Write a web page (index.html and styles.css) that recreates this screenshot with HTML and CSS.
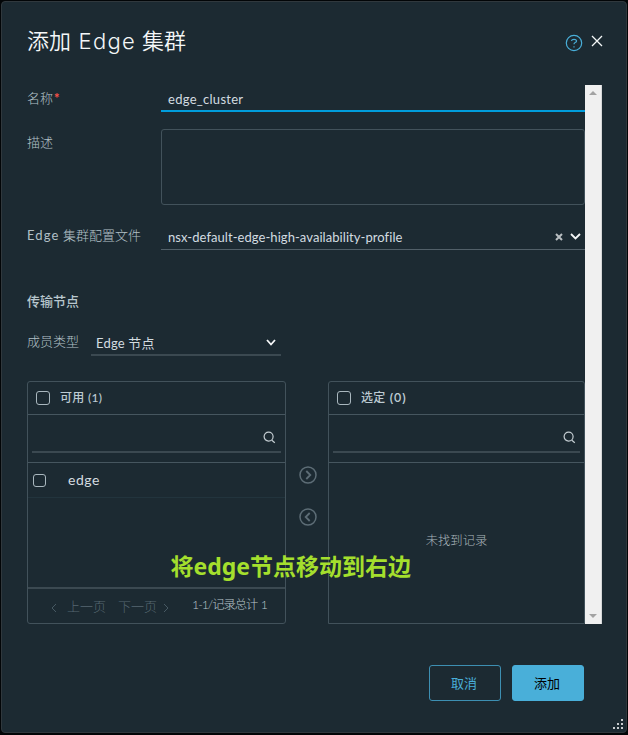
FILE: index.html
```html
<!DOCTYPE html>
<html lang="zh-CN">
<head>
<meta charset="utf-8">
<title>添加 Edge 集群</title>
<link rel="stylesheet" href="styles.css">
</head>
<body>
<div class="modal">
  <header class="header">
    <h1 class="title">添加 <span class="title-latin">Edge</span> 集群</h1>
    <svg class="help" width="18" height="18" viewBox="0 0 18 18"><circle cx="9" cy="9" r="7.7"/><path d="M6.4 6.8Q6.8 5.4 9 5.4T11.6 6.8Q11.6 8 10.2 8.5Q9 9 9 10.2M9 12.2v1.2"/></svg>
    <svg class="close" width="12" height="12" viewBox="0 0 12 12"><path d="M1 1l10 10M11 1L1 11"/></svg>
  </header>
  <div class="body">
    <main class="content">
      <div class="row name-row"><label class="label">名称<b class="required">*</b></label><div class="input focused"><span class="t-name">edge_cluster</span></div></div>
      <div class="row desc-row"><label class="label">描述</label><div class="textarea"></div></div>
      <div class="row profile-row"><label class="label"><span class="t-edge">Edge</span> 集群配置文件</label>
        <div class="input combo"><span class="t-profile">nsx-default-edge-high-availability-profile</span>
          <svg class="clear" width="8" height="8" viewBox="0 0 8 8"><path d="M1 1l6 6M7 1L1 7"/></svg>
          <svg class="chevron" width="11" height="7" viewBox="0 0 11 7"><path d="M1 1l4.5 4.5L10 1"/></svg>
        </div></div>
      <h2 class="section">传输节点</h2>
      <div class="type-row"><label class="label type-label">成员类型</label><div class="select"><span class="t-type">Edge 节点</span><svg class="chevron" width="10" height="7" viewBox="0 0 10 7"><path d="M1 1l4 4.5L9 1"/></svg></div></div>
      <div class="transfer">
        <section class="panel">
          <div class="panel-head"><i class="check"></i><span>可用 (1)</span></div>
          <div class="search"><div class="search-field"><svg width="13" height="13" viewBox="0 0 13 13"><circle cx="5.6" cy="5.6" r="4.5"/><path d="M8.8 9.2l3 2.5"/></svg></div></div>
          <div class="list"><div class="item"><i class="check"></i><span class="t-item">edge</span></div></div>
          <div class="pager"><svg width="6" height="10" viewBox="0 0 6 10"><path d="M5 1L1 5l4 4"/></svg><span class="prev">上一页</span><span class="next">下一页</span><svg width="6" height="10" viewBox="0 0 6 10"><path d="M1 1l4 4-4 4"/></svg><span class="total">1-1/记录总计 1</span></div>
        </section>
        <div class="arrows">
          <svg width="18" height="18" viewBox="0 0 18 18"><circle cx="9" cy="9" r="8"/><path d="M7.3 5l4 4-4 4"/></svg>
          <svg width="18" height="18" viewBox="0 0 18 18"><circle cx="9" cy="9" r="8"/><path d="M10.7 5l-4 4 4 4"/></svg>
        </div>
        <section class="panel selected">
          <div class="panel-head"><i class="check"></i><span>选定 <span class="count">(0)</span></span></div>
          <div class="search"><div class="search-field"><svg width="13" height="13" viewBox="0 0 13 13"><circle cx="5.6" cy="5.6" r="4.5"/><path d="M8.8 9.2l3 2.5"/></svg></div></div>
          <div class="empty">未找到记录</div>
        </section>
      </div>
    </main>
    <div class="scrollbar"><i class="up"></i><i class="down"></i></div>
  </div>
  <footer class="footer"><button class="btn">取消</button><button class="btn primary">添加</button></footer>
  <svg class="grip" width="12" height="12" viewBox="0 0 12 12"><path d="M9 1h2M5 5h2M9 5h2M1 9h2M5 9h2M9 9h2"/></svg>
  <div class="note">将<span class="note-latin">edge</span>节点移动到右边</div>
</div>
</body>
</html>
```
FILE: styles.css
```css
* { box-sizing: border-box; }
body {
  margin: 0;
  width: 628px;
  height: 735px;
  padding: 1px 1px 2px;
  overflow: hidden;
  background: #020507;
  font-family: Lato, "Noto Sans CJK SC", sans-serif;
  font-size: 13px;
  color: #d3dce0;
}
svg { display: block; flex: none; fill: none; }
i { display: block; flex: none; }
.modal {
  position: relative;
  height: 732px;
  padding: 0 25px;
  background: #1c2a32;
  border: 1px solid #30383d;
  border-radius: 4px;
}
.header { display: flex; align-items: center; height: 83px; padding-bottom: 5px; }
.title {
  flex: 1;
  margin: -1px 0 0;
  font: 350 22px/30px Lato, "Noto Sans CJK SC", sans-serif;
  color: #f4f7f8;
  white-space: nowrap;
}
.title-latin { font-family: Inter, Lato, sans-serif; font-size: 22px; font-weight: 300; letter-spacing: 1.3px; margin: 0 0 0 1.5px; }
.help { margin: 3px 8px 0 0; stroke: #49afd9; stroke-width: 1.2; }
.close { margin-right: -2px; stroke: #f4f7f8; stroke-width: 1.3; }
.body { display: flex; width: 575px; height: 539px; }
.content { width: 558px; overflow: hidden; }
.scrollbar {
  display: flex;
  flex-direction: column;
  justify-content: space-between;
  align-items: center;
  width: 17px;
  padding: 6px 0 6px;
  background: #f0f0f0;
  border-right: 1px solid #d5d7d8;
}
.up, .down { border: 4px solid transparent; }
.up { border-top: 0; border-bottom-color: #a3a3a3; }
.down { border-bottom: 0; border-top-color: #a3a3a3; }
.row { display: flex; }
.label { width: 134px; flex: none; font-weight: 300; line-height: 20px; color: #b2c0c7; white-space: nowrap; }
.required { color: #f54f47; margin-left: 1px; font-size: 13px; font-weight: 900; }
.input { flex: 1; display: flex; align-items: center; padding-left: 7px; white-space: nowrap; }
.name-row { height: 27px; }
.name-row .label { padding-top: 3px; }
.focused { border-bottom: 2px solid #009ddc; padding-top: 3px; }
.t-name { letter-spacing: .28px; }
.desc-row { height: 76px; margin-top: 17px; }
.desc-row .label { padding-top: 3px; }
.textarea { flex: 1; height: 76px; border: 1px solid #42525b; border-radius: 3px; }
.profile-row { height: 27px; margin-top: 18px; }
.profile-row .label { padding-top: 2px; }
.t-edge { font-weight: 400; letter-spacing: 1.1px; }
.combo { border-bottom: 1px solid #526069; padding: 1px 4px 0 7px; }
.t-profile { flex: 1; letter-spacing: .06px; }
.clear { stroke: #b8bec1; stroke-width: 2; margin-right: 7px; }
.chevron { stroke: #f5f7f8; stroke-width: 1.8; }
.section { margin: 41px 0 0; height: 20px; font: 500 13px/20px Lato, "Noto Sans CJK SC", sans-serif; color: #b8c7ce; }
.type-row { display: flex; height: 25px; margin-top: 20px; }
.type-label { width: 64px; }
.select {
  display: flex;
  align-items: center;
  justify-content: space-between;
  width: 190px;
  padding: 0 5px;
  border-bottom: 2px solid #3b4951;
}
.t-type { letter-spacing: .2px; }
.transfer { display: flex; height: 243px; margin-top: 25px; }
.panel { width: 259px; border: 1px solid #42525b; border-radius: 3px; }
.panel.selected { width: 257px; border-bottom-left-radius: 0; border-bottom-right-radius: 0; }
.panel-head {
  display: flex;
  align-items: center;
  gap: 10px;
  height: 33px;
  padding: 0 8px 2px;
  border-bottom: 1px solid #46565f;
  font-size: 12px;
  font-weight: 500;
  letter-spacing: .3px;
  color: #bdcbd2;
}
.panel-head span { margin-top: -1px; }
.count { font-family: Inter, sans-serif; letter-spacing: .5px; }
.panel-head .check { margin-top: 1px; }
.check { width: 14px; height: 14px; border: 1px solid #a9b7be; border-radius: 3px; }
.search { height: 48px; padding: 7px 4px 0; border-bottom: 1px solid #46565f; }
.search-field { display: flex; justify-content: flex-end; height: 31px; padding: 9px 5px 0 0; border-bottom: 2px solid #3b4951; }
.selected .search-field { padding-right: 4px; }
.search-field svg { stroke: #c4cdd2; stroke-width: 1.2; }
.list { height: 126px; border-bottom: 2px solid #3b4951; }
.item { display: flex; align-items: center; height: 35px; padding-left: 5px; gap: 22px; border-bottom: 1px solid #22343d; }
.item .check { width: 13px; height: 13px; }
.t-item { margin-top: -2px; font-size: 14px; letter-spacing: .5px; }
.pager { display: flex; align-items: center; height: 33px; padding-left: 23px; color: #566771; font-weight: 300; white-space: nowrap; }
.pager svg { stroke: #475963; margin-top: 4px; }
.prev { margin: 0 12px 0 10px; }
.next { margin: 0 6px 0 0; }
.total { margin: -4px 0 0 23px; font-size: 12.3px; letter-spacing: -1px; word-spacing: 1px; color: #b8c5cb; }
.arrows { width: 42px; display: flex; flex-direction: column; align-items: center; gap: 24px; padding: 85px 0 0 2px; }
.arrows svg { stroke: #5d6d76; stroke-width: 1.5; }
.arrows path { stroke-width: 1.8; }
.empty { display: flex; align-items: center; justify-content: center; height: 153px; font-size: 12.3px; font-weight: 300; color: #aab6bc; }
.footer { display: flex; gap: 11px; justify-content: flex-end; padding-top: 41px; margin-right: -18px; padding-right: 35px; }
.btn {
  width: 72px;
  height: 36px;
  padding: 0 2px 2px 0;
  border: 1px solid #3d8fb2;
  border-radius: 3px;
  background: none;
  color: #49afd9;
  font: 400 13px Lato, "Noto Sans CJK SC", sans-serif;
}
.primary { background: #49afd9; border-color: #49afd9; color: #000; }
.grip { position: absolute; right: 2px; bottom: 1px; stroke: #c8cccf; stroke-width: 2; }
.note {
  position: absolute;
  left: 168.5px;
  top: 548px;
  font: 700 23px/32px "Noto Sans", "Noto Sans CJK SC", sans-serif;
  color: #a4df2d;
  white-space: nowrap;
}
```
